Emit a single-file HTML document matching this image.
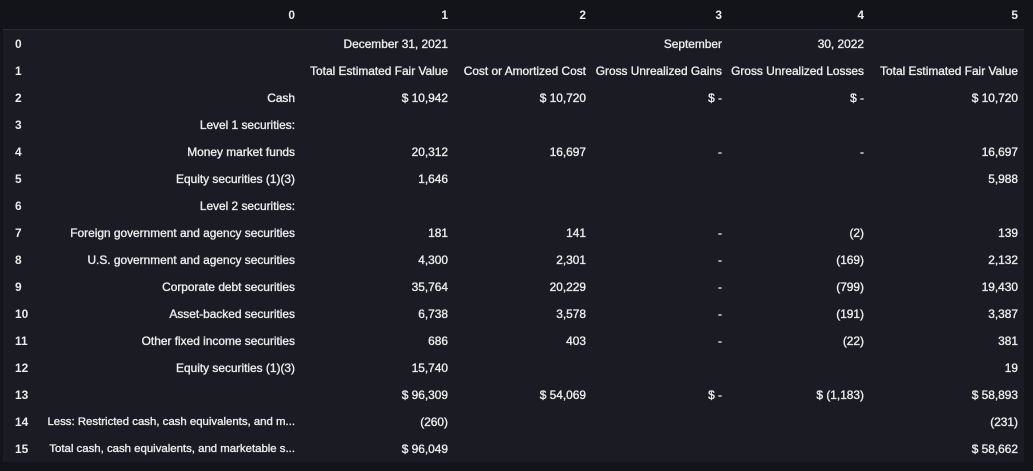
<!DOCTYPE html>
<html><head><meta charset="utf-8"><style>
html,body{margin:0;padding:0;background:#131419;width:1033px;height:471px;overflow:hidden}
body{font-family:"Liberation Sans",sans-serif;font-size:11.9px;color:#ececec;position:relative}
.body{position:absolute;left:3px;top:29px;width:1021px;height:433px;background:#1b1c23;border-top:1px solid #2a2b33;box-sizing:border-box}
.c{position:absolute;white-space:nowrap;line-height:14px;-webkit-text-stroke:0.35px #ececec}
.r{transform:translateX(-100%)}
.b{font-weight:bold;-webkit-text-stroke:0}
.n{font-size:11.4px}
</style></head><body>
<div class="body"></div>
<div id="t"></div>
<script>
var edges=[295,448,586,722,864,1018];
var hdr=["0","1","2","3","4","5"];
var rows=[
["","December 31, 2021","","September","30, 2022",""],
["","Total Estimated Fair Value","Cost or Amortized Cost","Gross Unrealized Gains","Gross Unrealized Losses","Total Estimated Fair Value"],
["Cash","$ 10,942","$ 10,720","$ -","$ -","$ 10,720"],
["Level 1 securities:","","","","",""],
["Money market funds","20,312","16,697","-","-","16,697"],
["Equity securities (1)(3)","1,646","","","","5,988"],
["Level 2 securities:","","","","",""],
["Foreign government and agency securities","181","141","-","(2)","139"],
["U.S. government and agency securities","4,300","2,301","-","(169)","2,132"],
["Corporate debt securities","35,764","20,229","-","(799)","19,430"],
["Asset-backed securities","6,738","3,578","-","(191)","3,387"],
["Other fixed income securities","686","403","-","(22)","381"],
["Equity securities (1)(3)","15,740","","","","19"],
["","$ 96,309","$ 54,069","$ -","$ (1,183)","$ 58,893"],
["Less: Restricted cash, cash equivalents, and m...","(260)","","","","(231)"],
["Total cash, cash equivalents, and marketable s...","$ 96,049","","","","$ 58,662"]];
var h="";
for(var j=0;j<6;j++)h+='<div class="c r b" style="left:'+edges[j]+'px;top:8px">'+hdr[j]+'</div>';
for(var i=0;i<rows.length;i++){var y=37+i*27;
h+='<div class="c b" style="left:15px;top:'+y+'px">'+i+'</div>';
for(var j=0;j<6;j++)if(rows[i][j])h+='<div class="c r'+(i>=14&&j==0?' n':'')+'" style="left:'+edges[j]+'px;top:'+y+'px">'+rows[i][j]+'</div>';}
document.getElementById("t").innerHTML=h;
</script>
</body></html>
